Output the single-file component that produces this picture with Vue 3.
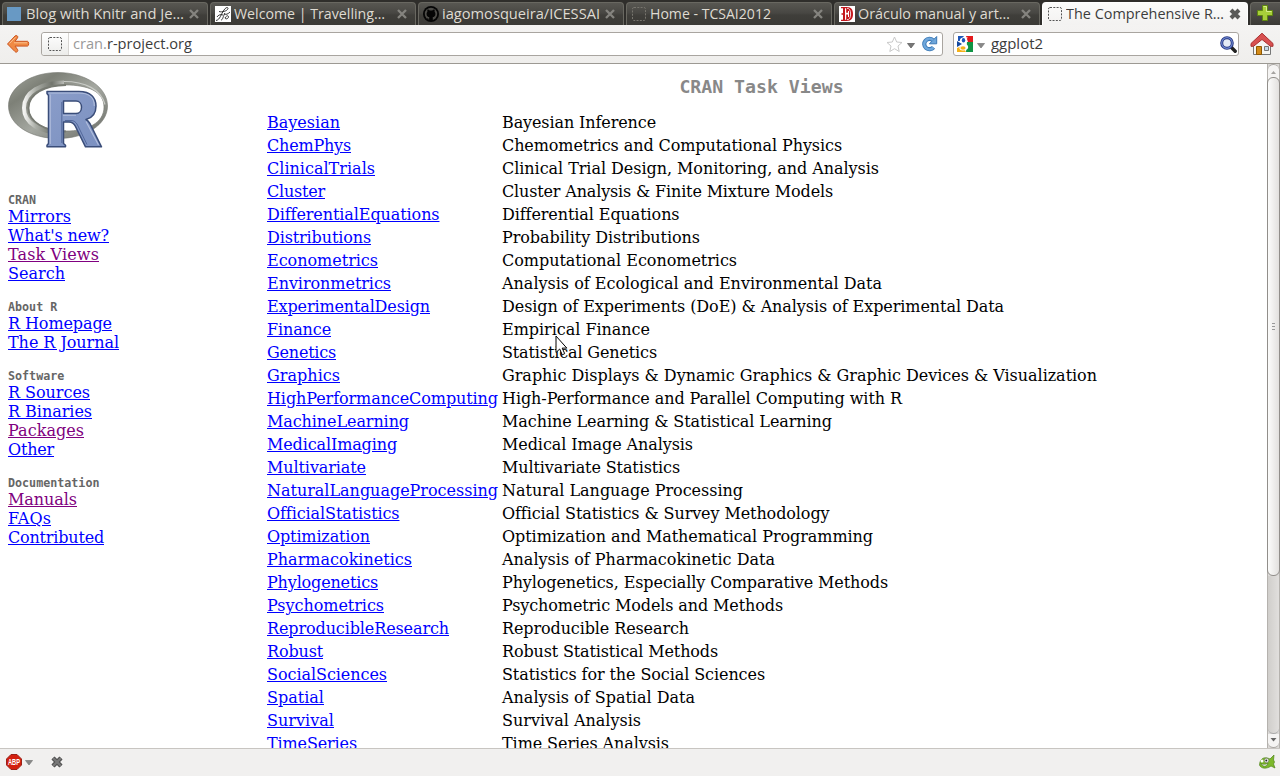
<script setup>
const tabs = [
  { title: 'Blog with Knitr and Je…', icon: 'square', w: 158 },
  { title: 'Welcome | Travelling…', icon: 'script', w: 151 },
  { title: 'iagomosqueira/ICESSAI', icon: 'github', w: 158 },
  { title: 'Home - TCSAI2012', icon: 'blank', w: 121 },
  { title: 'Oráculo manual y art…', icon: 'letter', w: 152 },
  { title: 'The Comprehensive R…', icon: 'blank', w: 158, active: true },
]
// link: [label, text width, visited]
const groups = [
  { head: 'CRAN', links: [['Mirrors', 63], ["What's new?", 101], ['Task Views', 91, true], ['Search', 57]] },
  { head: 'About R', links: [['R Homepage', 104], ['The R Journal', 111]] },
  { head: 'Software', links: [['R Sources', 82], ['R Binaries', 84], ['Packages', 76, true], ['Other', 46]] },
  { head: 'Documentation', links: [['Manuals', 69, true], ['FAQs', 43], ['Contributed', 96]] },
]
// row: [view, text width, description, text width]
const views = [
  ['Bayesian', 73, 'Bayesian Inference', 154],
  ['ChemPhys', 84, 'Chemometrics and Computational Physics', 340],
  ['ClinicalTrials', 108, 'Clinical Trial Design, Monitoring, and Analysis', 377],
  ['Cluster', 58, 'Cluster Analysis & Finite Mixture Models', 331],
  ['DifferentialEquations', 172, 'Differential Equations', 177],
  ['Distributions', 104, 'Probability Distributions', 198],
  ['Econometrics', 111, 'Computational Econometrics', 235],
  ['Environmetrics', 124, 'Analysis of Ecological and Environmental Data', 380],
  ['ExperimentalDesign', 163, 'Design of Experiments (DoE) & Analysis of Experimental Data', 502],
  ['Finance', 64, 'Empirical Finance', 148],
  ['Genetics', 69, 'Statistical Genetics', 155],
  ['Graphics', 73, 'Graphic Displays & Dynamic Graphics & Graphic Devices & Visualization', 595],
  ['HighPerformanceComputing', 231, 'High-Performance and Parallel Computing with R', 400],
  ['MachineLearning', 142, 'Machine Learning & Statistical Learning', 330],
  ['MedicalImaging', 130, 'Medical Image Analysis', 191],
  ['Multivariate', 99, 'Multivariate Statistics', 178],
  ['NaturalLanguageProcessing', 231, 'Natural Language Processing', 241],
  ['OfficialStatistics', 132, 'Official Statistics & Survey Methodology', 327],
  ['Optimization', 103, 'Optimization and Mathematical Programming', 371],
  ['Pharmacokinetics', 145, 'Analysis of Pharmacokinetic Data', 273],
  ['Phylogenetics', 111, 'Phylogenetics, Especially Comparative Methods', 386],
  ['Psychometrics', 117, 'Psychometric Models and Methods', 281],
  ['ReproducibleResearch', 182, 'Reproducible Research', 187],
  ['Robust', 56, 'Robust Statistical Methods', 216],
  ['SocialSciences', 120, 'Statistics for the Social Sciences', 263],
  ['Spatial', 57, 'Analysis of Spatial Data', 193],
  ['Survival', 67, 'Survival Analysis', 139],
  ['TimeSeries', 90, 'Time Series Analysis', 167],
]
// Spreads the difference to the given text width over the letters.
const vFit = {
  mounted(el, { value }) {
    const w = el.getBoundingClientRect().width
    if (w) el.style.letterSpacing = `${(value - w) / el.textContent.length}px`
  },
}
</script>

<template>
  <div class="window">
    <div class="tabbar">
      <div v-for="t in tabs" :key="t.title" class="tab" :class="{ active: t.active }">
        <svg class="fav" width="16" height="16" viewBox="0 0 16 16">
          <rect v-if="t.icon === 'square'" x="0" y="1" width="14" height="14" fill="#6899c4" />
          <g v-else-if="t.icon === 'script'">
            <rect width="16" height="16" fill="#fff" />
            <path d="M1 14.500C5 14 6 8 9 4c2-3 4-3 4-1.500C12.500 5 7 6.500 4 5.500M2 11c1-2 4-3 6-2M6 14c2 0 2-4 4-7M9 8c2 1 4 0 6-2M10 12c1-2 3-3 3.500-1.500S11 14 10 12Z" fill="none" stroke="#222" stroke-width=".9" />
          </g>
          <g v-else-if="t.icon === 'github'">
            <circle cx="8" cy="8" r="8" fill="#050505" />
            <circle cx="8" cy="8" r="6.200" fill="#4d4c48" />
            <path d="M3.600 8.200c0-1.200.3-1.800.8-2.400-.2-.8-.1-1.600.1-2.300.8 0 1.600.5 2.100.9h2.800c.5-.4 1.300-.9 2.100-.9.2.7.300 1.500.1 2.300.5.6.8 1.200.8 2.400 0 2-1.300 2.700-2.600 2.900V15H6.200v-1.500c-1.500.2-1.900-.7-2.500-1.300.8-.2 1.300.9 2.500.5v-1.600C4.900 10.900 3.600 10.200 3.600 8.200Z" fill="#050505" />
          </g>
          <g v-else-if="t.icon === 'letter'">
            <rect width="16" height="16" fill="#fff" />
            <path d="M2 1h6c4.500 0 6 3 6 7s-1.500 7-6 7H2v-1.200h2V8.700H2.500V7.300H4V2.200H2Z" fill="#c4161c" />
            <path d="M6 2.200h1.200v4.600H9V5h1v6H9V8.500H7.200v5.300H6Z" fill="#fff" />
            <path d="M8 2.300c2.500 0 3.600 2 3.600 5.700s-1.100 5.700-3.600 5.700" fill="none" stroke="#fff" stroke-width=".8" />
          </g>
          <rect v-else x="1.500" y="1.500" width="13" height="13" rx="1.500" fill="none" :stroke="t.active ? '#555' : '#77756e'" stroke-dasharray="2 1.300" />
        </svg>
        <svg class="title" width="160" height="22"><text x="0" y="15.800" :textLength="t.w" lengthAdjust="spacingAndGlyphs">{{ t.title }}</text></svg>
        <svg class="close" width="14" height="14" viewBox="0 0 14 14">
          <path d="M3 3l8 8M11 3l-8 8" />
        </svg>
      </div>
      <div class="newtab">
        <svg width="16" height="16" viewBox="0 0 16 16"><path d="M5.500.5h5v5h5v5h-5v5h-5v-5h-5v-5h5Z" fill="#a8cf3a" stroke="#5f8710" /><path d="M6.500 1.500h3v5h5" fill="none" stroke="#d6ec8c" /></svg>
      </div>
    </div>

    <div class="toolbar">
      <svg class="back" width="24" height="20" viewBox="0 0 24 20">
        <path d="M1.500 10L9 2c1.500-1.200 3.500.2 2.600 1.800L9 7.300h12.500c1.600 0 1.600 4.800 0 4.800H9l2.600 3.500C12.500 17.500 10.300 19 9 17.600Z" fill="#f08a44" stroke="#cc5420" stroke-linejoin="round" />
        <path d="M3.500 9.500L9.500 3.300M8 8.800h13" fill="none" stroke="#fac08e" />
      </svg>
      <div class="field url">
        <span class="identity"><svg width="16" height="16"><rect x="1.500" y="1.500" width="13" height="13" rx="1.500" fill="none" stroke="#555" stroke-dasharray="2 1.300" /></svg></span>
        <svg class="addr" width="130" height="22"><text x="0" y="16.400" textLength="119" lengthAdjust="spacingAndGlyphs"><tspan>cran.</tspan><tspan>r-project.org</tspan></text></svg>
        <svg class="star" width="17" height="17" viewBox="0 0 17 17"><path d="M8.500 1l2.200 5 5.300.5-4 3.500 1.200 5.500-4.700-2.800-4.700 2.800L5 10 1 6.500 6.300 6Z" fill="#fff" stroke="#c9c9c9" /></svg>
        <svg class="drop" width="8" height="6" viewBox="0 0 8 6"><path d="M.5.500h7L4 5Z" fill="#777" stroke="#555" stroke-width=".7" /></svg>
        <svg class="reload" width="17" height="16" viewBox="0 0 17 16"><path d="M12.500 11.300A5.200 5.200 0 1 1 12 4.200" fill="none" stroke="#3c79b5" stroke-width="4.200" /><path d="M15.700.5v7.300H8.400Z" fill="#6ea6da" stroke="#3c79b5" /><path d="M12.300 11.600A5.200 5.200 0 1 1 12 4.200" fill="none" stroke="#70a8dc" stroke-width="2.500" /></svg>
      </div>
      <div class="field search">
        <svg class="google" width="16" height="16" viewBox="0 0 16 16"><rect width="16" height="16" rx="1" fill="#fff" /><path d="M1 0h6L3 5H1Z" fill="#1c55b8" /><path d="M9 0h7v6h-5Z" fill="#e4191c" /><path d="M10 6h6v10H9Z" fill="#109444" /><path d="M0 12l5-2 4 6H0Z" fill="#f5b118" /><path d="M0 5l5 3-5 3Z" fill="#164a9f" /><path d="M11 1.500H6.500C2 1.500 1.500 7 6 7.300c-.4 1 .2 1.500.9 2C1 9.500 1 14.500 6 14.500c6 0 6.500-4.500 3-6.500C7 7 9 6.500 9.500 5c.4-1.200 0-1.700-.5-2.500h1Z" fill="#fff" /><ellipse cx="6.500" cy="4.300" rx="1.700" ry="2.200" fill="#1c55b8" /><ellipse cx="6" cy="12" rx="2.600" ry="1.800" fill="#f5b118" /></svg>
        <svg class="drop" width="8" height="6" viewBox="0 0 8 6"><path d="M.5.500h7L4 5Z" fill="#888" stroke="#777" stroke-width=".7" /></svg>
        <svg class="query" width="80" height="22"><text x="0" y="16.400" textLength="52" lengthAdjust="spacingAndGlyphs">ggplot2</text></svg>
        <svg class="lens" width="17" height="17" viewBox="0 0 17 17"><path d="M11.500 11.500l3.700 3.700" stroke="#222" stroke-width="3.400" stroke-linecap="round" /><circle cx="7" cy="7" r="5.300" fill="#e4ebf6" stroke="#25347c" stroke-width="3" /><circle cx="7" cy="7" r="5.300" fill="none" stroke="#6c86d0" stroke-width="1.200" /></svg>
      </div>
      <svg class="home" width="24" height="24" viewBox="0 0 24 24">
        <path d="M3.500 11L12 4l8.500 7v11.500h-17Z" fill="#f5f5f2" stroke="#777" />
        <path d="M6.500 14.500h5v8h-5Z" fill="#d48b19" stroke="#8f5902" />
        <path d="M14.500 14.500h4v4h-4Z" fill="#c3dbe9" stroke="#777" />
        <path d="M12 1.200L1 11.500v2.800h2.500L12 7.500l8.500 6.800H23v-2.800Z" fill="#d85050" stroke="#a93232" stroke-linejoin="round" />
      </svg>
    </div>

    <div class="page">
      <nav class="side">
        <svg class="rlogo" width="102" height="78" viewBox="0 0 102 78">
          <defs>
            <linearGradient id="ring" x1="0" y1="0" x2="1" y2="1"><stop offset="0" stop-color="#a3a69e" /><stop offset=".25" stop-color="#7d8077" /><stop offset=".55" stop-color="#a5a8a1" /><stop offset="1" stop-color="#686b65" /></linearGradient>
            <linearGradient id="inner" x1="0" x2="1"><stop offset="0" stop-color="#f4f4f2" /><stop offset=".3" stop-color="#a9aca5" /><stop offset=".7" stop-color="#72756d" /><stop offset="1" stop-color="#b9bbb6" /></linearGradient>
            <linearGradient id="rfill" x1="0" x2="1" y2="1"><stop offset="0" stop-color="#8a9dc9" /><stop offset="1" stop-color="#7b90c0" /></linearGradient>
          </defs>
          <path fill-rule="evenodd" d="M50 .5C77 .5 99.500 15 99.500 34S77 66.500 50 66.500 .5 53 .5 34 23 .5 50 .5ZM58 13C37 13 20.500 22 20.500 36S37 59 58 59 96 51 96 35 79 13 58 13Z" fill="url(#ring)" stroke="#73766f" stroke-width=".6" />
          <path d="M56 10.500C33 10.500 16 20 16 36S33 61 56 61" fill="none" stroke="url(#inner)" stroke-width="4" />
          <path d="M58 13C37 13 20.500 22 20.500 36S37 59.500 58 59.500" fill="none" stroke="#777a72" stroke-width="1.800" />
          <path d="M56 9.500c21 0 37 8 41 23" fill="none" stroke="#c9cbc6" stroke-width="1.200" />
          <path fill-rule="evenodd" d="M39 19.500H71C83 19.500 88 26 88 34c0 7.500-4 12-10 13.500 2 1 3 2.500 4.200 4.500L93.500 74.800H77.500L67.500 54.500C66 51.500 64.500 50 61 50h-5.500V71.500l2 1.800v1.500H39v-1.500l1.500-1.800V23.500L39 21.500ZM55.500 29V41.500H68c3.500 0 5.500-3 5.500-6.300S71.500 29 68 29Z" fill="url(#rfill)" stroke="#3a4d79" stroke-width="1.500" stroke-linejoin="round" />
          <path d="M40.500 21H71C81 21 86.300 26 86.300 34M42.200 22.500V72M55 43.300H68M78 49.500L90.500 73" fill="none" stroke="#b2bfdd" stroke-width="1.100" />
          <path d="M53.800 30V71M57 48.500h6c3 0 5 1.500 6.500 4.500L79 72.500" fill="none" stroke="#53689b" stroke-width="1" />
        </svg>
        <div v-for="g in groups" :key="g.head" class="group">
          <div class="head">{{ g.head }}</div>
          <div v-for="l in g.links" :key="l[0]" class="item"><a v-fit="l[1]" :class="{ visited: l[2] }">{{ l[0] }}</a></div>
        </div>
      </nav>
      <main class="main">
        <h1>CRAN Task Views</h1>
        <table>
          <tbody>
            <tr v-for="v in views" :key="v[0]"><td><a v-fit="v[1]">{{ v[0] }}</a></td><td><span v-fit="v[3]">{{ v[2] }}</span></td></tr>
          </tbody>
        </table>
      </main>
      <div class="scroll">
        <div class="step"><svg width="7" height="4"><path d="M1 4h5L3.500 1Z" fill="#a5a3a0" /></svg></div>
        <div class="thumb"><i></i><i></i><i></i></div>
        <div class="trough"></div>
        <div class="step down"><svg width="7" height="4"><path d="M.5 0h6L3.500 3.500Z" fill="#666" /></svg></div>
      </div>
    </div>

    <div class="status">
      <svg class="abp" width="16" height="16" viewBox="0 0 16 16"><path d="M5 .5h6L15.500 5v6L11 15.500H5L.5 11V5Z" fill="#d3200f" stroke="#9a2118" /><text x="2" y="11" textLength="12" lengthAdjust="spacingAndGlyphs">ABP</text></svg>
      <svg class="drop" width="8" height="6" viewBox="0 0 8 6"><path d="M.5.500h7L4 5Z" fill="#888" stroke="#777" stroke-width=".7" /></svg>
      <svg class="stop" width="14" height="14" viewBox="0 0 14 14"><path d="M3 3l8 8M11 3l-8 8" stroke="#4d4d4d" stroke-width="4.400" /><path d="M3 3l8 8M11 3l-8 8" stroke="#777" stroke-width="2.400" /></svg>
      <svg class="fish" width="17" height="16" viewBox="0 0 17 16"><path d="M1 8C3 3 7 3 11 5l4-4-.5 5 1 2-1 2 1.500 4-4-2c-4 3-10 3-11.500-1Z" fill="#7cb82b" stroke="#4f8419" stroke-width=".7" /><circle cx="7.500" cy="6.500" r="2.200" fill="#fff" stroke="#555" stroke-width=".5" /><circle cx="3" cy="7" r="1.500" fill="#fff" /><circle cx="7.300" cy="6.500" r="1" fill="#222" /><path d="M2 9.500c2 1.200 5 1 7 0-1 3-5 4-7 0Z" fill="#fff" stroke="#3d6614" stroke-width=".6" /></svg>
    </div>

    <svg class="pointer" width="13" height="21" viewBox="0 0 13 21"><path d="M1 1v16.500l3.700-3.500 2.500 5.800 2.500-1.100-2.500-5.600h4.600Z" fill="#fff" stroke="#000" /></svg>
  </div>
</template>

<style>
html, body { margin: 0; overflow: hidden; }
</style>

<style scoped>
* { box-sizing: border-box; }
svg { display: block; flex: none; }
.window { position: relative; width: 1280px; height: 776px; display: flex; flex-direction: column; background: #fff; overflow: hidden; font: 16px/19px "DejaVu Serif", serif; color: #000; }
.tabbar { flex: none; height: 25px; padding: 2px 0 0 2px; display: flex; background: #2f2e2b; }
.tab { flex: none; width: 206px; height: 23px; margin-right: 2px; padding-left: 4px; display: flex; align-items: center; background: linear-gradient(#585752, #484743 45%, #3f3e3a 55%, #3b3a36); border: 1px solid #696861; border-bottom: 0; border-radius: 4px 4px 0 0; }
.tab.active { background: linear-gradient(#fbfbfa, #f3f2f1); border-color: #fff; }
.title { margin-left: 3px; }
.title text, .addr text, .query text { font: 14.200px "Open Sans", "Noto Sans", sans-serif; fill: #dfdbd2; }
.active .title text, .addr text, .query text { fill: #3c3c3c; }
.addr tspan:first-child { fill: #999; }
.close { margin-left: 1px; }
.close path { stroke: #85847f; stroke-width: 2.300; }
.active .close { margin-left: 2px; }
.active .close path { stroke: #5a5a58; stroke-width: 4; }
.newtab { flex: none; width: 32px; height: 23px; padding: 2px 0 0 6px; border: 1px solid #696861; border-bottom: 0; border-radius: 4px 0 0 0; background: linear-gradient(#585752, #3b3a36); }
.toolbar { flex: none; height: 39px; display: flex; align-items: center; padding: 0 6px; background: linear-gradient(#f4f3f2, #efeeec); border-bottom: 1px solid #9c9993; }
.back { margin-right: 11px; }
.field { height: 24px; display: flex; align-items: center; background: #fff; border: 1px solid #a9a5a0; border-radius: 3px; }
.url { width: 902px; }
.identity { width: 27px; height: 22px; padding: 3px 0 0 5px; border-right: 1px solid #d8d6d3; background: linear-gradient(#fff, #ececea); border-radius: 3px 0 0 3px; }
.addr { margin-left: 4px; }
.star { margin-left: auto; }
.url .drop { margin: 3px 6px 0 4px; }
.reload { margin-right: 4px; }
.search { width: 286px; margin-left: 10px; padding-left: 3px; }
.search .drop { margin: 3px 7px 0 4px; }
.query { margin-left: -1px; }
.lens { margin-left: auto; margin-right: 1px; }
.home { margin-left: 11px; }
.page { flex: none; height: 684px; display: flex; overflow: hidden; }
.side { width: 256px; padding: 8px 8px 0; }
.rlogo { margin-bottom: 41px; }
.group { margin-bottom: 15px; }
.head { height: 16px; font: bold 11.700px/18px "DejaVu Sans Mono", monospace; color: #666; }
a { color: #00f; text-decoration: underline; }
a.visited { color: #800080; }
.main { width: 1011px; padding: 0 8px; }
h1 { margin: 12px 0 12px; font: bold 18.200px/22px "DejaVu Sans Mono", monospace; color: #888; text-align: center; }
table { border-collapse: separate; border-spacing: 2px; table-layout: fixed; width: 900px; }
td { padding: 1px; height: 21px; white-space: nowrap; }
td:first-child { width: 233px; }
.scroll { width: 13px; display: flex; flex-direction: column; background: #dcdad8; border-left: 1px solid #b5b2ae; border-right: 1px solid #b5b2ae; }
.step { height: 18px; padding: 5px 0 0 2px; background: #f5f4f3; border: 1px solid #aaa7a3; border-width: 1px 0; border-radius: 6px 6px 0 0; }
.thumb { height: 499px; margin: -5px -1px 0; border: 1px solid #918e8a; border-radius: 6px; background: linear-gradient(90deg, #fcfcfb, #e2e0de); display: flex; flex-direction: column; align-items: center; justify-content: center; gap: 2px; }
.thumb i { width: 3px; height: 1px; background: #999; }
.trough { flex: 1; border-bottom: 1px solid #aaa; border-radius: 0 0 6px 6px; background: linear-gradient(90deg, #d0cecb, #e1dfdd); }
.down { height: 14px; padding-top: 4px; border-width: 0 0 1px; border-radius: 0 0 6px 6px; }
.status { flex: none; height: 28px; display: flex; align-items: center; padding: 0 4px 2px 6px; background: #f1f0ef; border-top: 1px solid #c8c5c1; }
.abp text { font: bold 8.500px "Liberation Sans", sans-serif; fill: #fff; }
.status .drop { margin: 2px 17px 0 3px; }
.fish { margin-left: auto; }
.pointer { position: absolute; left: 555px; top: 335px; }
</style>
